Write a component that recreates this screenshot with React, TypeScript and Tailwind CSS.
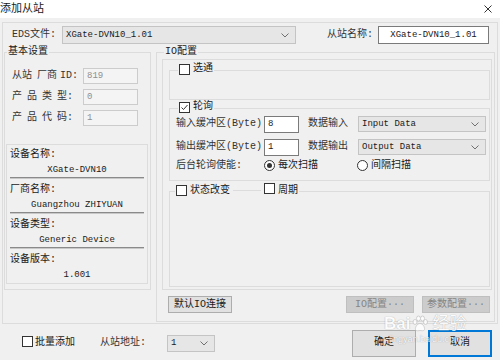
import React from "react";

const F = "font-['Liberation_Mono','Noto_Sans_CJK_SC',monospace]";

function Check({ checked }: { checked?: boolean }) {
  return (
    <span className="w-[11px] h-[11px] border border-[#333333] bg-white inline-flex items-center justify-center shrink-0">
      {checked && (
        <svg width="9" height="9" viewBox="0 0 9 9">
          <path d="M1.5 4.5 L3.5 6.5 L7.5 2" fill="none" stroke="#333" strokeWidth="1" />
        </svg>
      )}
    </span>
  );
}

function Radio({ checked }: { checked?: boolean }) {
  return (
    <span className="w-[11px] h-[11px] rounded-full border border-[#333333] bg-white inline-flex items-center justify-center shrink-0">
      {checked && <span className="w-[5px] h-[5px] rounded-full bg-[#333333]" />}
    </span>
  );
}

function Chevron() {
  return (
    <svg width="8" height="5" viewBox="0 0 8 5" className="shrink-0">
      <path d="M0.5 0.5 L4 4 L7.5 0.5" fill="none" stroke="#707070" strokeWidth="1" />
    </svg>
  );
}

function Section({ label, value }: { label: string; value: string }) {
  return (
    <div className="flex flex-col">
      <div className="h-[12px]">{label}</div>
      <div className="h-[12px] mt-[3px] text-center text-[9px]">{value}</div>
      <div className="h-[2px] mt-[1px] border-t border-[#8a8a8a] bg-[#c8c8c8]" />
      <div className="h-[5px]" />
    </div>
  );
}

function Btn({ label, w, disabled }: { label: string; w: string; disabled?: boolean }) {
  return (
    <div
      className={`${w} h-[17px] flex items-center justify-center border ${
        disabled ? "bg-[#cccccc] border-[#bfbfbf] text-[#858585]" : "bg-[#e1e1e1] border-[#adadad]"
      }`}
    >
      {label}
    </div>
  );
}

export default function App() {
  return (
    <div
      className={`w-[500px] h-[360px] bg-[#f0f0f0] overflow-hidden flex flex-col text-[10px] leading-[12px] text-[#1a1a1a] relative ${F}`}
    >
      {/* Title bar */}
      <div className="h-[18px] bg-white flex items-center justify-between shrink-0">
        <span className="text-[11px]">添加从站</span>
        <svg width="8" height="8" viewBox="0 0 8 8" className="mr-[8px]">
          <path d="M0.5 0.5 L7.5 7.5 M7.5 0.5 L0.5 7.5" stroke="#333" strokeWidth="1" />
        </svg>
      </div>

      {/* Main frame */}
      <div className="mt-[4px] ml-[2px] w-[496px] h-[302px] border border-[#dcdcdc] flex flex-col shrink-0">
        {/* EDS row */}
        <div className="mt-[3px] flex items-center h-[18px]">
          <span className="ml-[9px] w-[50px] text-[#333]">EDS文件:</span>
          <div className="w-[234px] h-[18px] border border-[#c4c4c4] bg-[#e6e6e6] flex items-center justify-between pl-[3px] pr-[6px]">
            <span className="text-[9px]">XGate-DVN10_1.01</span>
            <Chevron />
          </div>
          <span className="ml-[31px] w-[51px] text-[#333]">从站名称:</span>
          <div className="w-[111px] h-[18px] bg-white border border-[#7a7a7a] flex items-center justify-center text-[9px]">
            XGate-DVN10_1.01
          </div>
        </div>

        {/* Columns */}
        <div className="mt-[2px] flex">
          {/* 基本设置 */}
          <fieldset className="ml-[1px] w-[147px] h-[244px] border border-[#dcdcdc] shrink-0">
            <legend className="ml-[2px] px-[1px] leading-[12px]">基本设置</legend>
            <div className="flex flex-col">
              <div className="mt-[10px] flex flex-col gap-[5px]">
                <div className="flex items-center h-[16px]">
                  <span className="ml-[7px] w-[71px] flex text-[#333]">
                    <span>从站</span>
                    <span className="ml-[5px]">厂商</span>
                    <span className="ml-[3px]">ID:</span>
                  </span>
                  <div className="w-[55px] h-[16px] border border-[#cccccc] bg-[#f4f4f4] text-[#8f8f8f] flex items-center pl-[3px] text-[9px]">
                    819
                  </div>
                </div>
                <div className="flex items-center h-[16px]">
                  <span className="ml-[7px] w-[71px] flex text-[#333]">
                    <span className="w-[15px]">产</span>
                    <span className="w-[15px]">品</span>
                    <span className="w-[15px]">类</span>
                    <span>型:</span>
                  </span>
                  <div className="w-[55px] h-[16px] border border-[#cccccc] bg-[#f4f4f4] text-[#8f8f8f] flex items-center pl-[3px] text-[9px]">
                    0
                  </div>
                </div>
                <div className="flex items-center h-[16px]">
                  <span className="ml-[7px] w-[71px] flex text-[#333]">
                    <span className="w-[15px]">产</span>
                    <span className="w-[15px]">品</span>
                    <span className="w-[15px]">代</span>
                    <span>码:</span>
                  </span>
                  <div className="w-[55px] h-[16px] border border-[#cccccc] bg-[#f4f4f4] text-[#8f8f8f] flex items-center pl-[3px] text-[9px]">
                    1
                  </div>
                </div>
              </div>
              <div className="mt-[18px] ml-[1px] w-[142px] h-[140px] border border-[#dcdcdc] pt-[4px] px-[3px] flex flex-col">
                <Section label="设备名称:" value="XGate-DVN10" />
                <Section label="厂商名称:" value="Guangzhou ZHIYUAN" />
                <Section label="设备类型:" value="Generic Device" />
                <div className="h-[12px]">设备版本:</div>
                <div className="h-[12px] mt-[3px] text-center text-[9px]">1.001</div>
              </div>
            </div>
          </fieldset>

          {/* IO配置 */}
          <fieldset className="ml-[5px] w-[339px] h-[276px] border border-[#dcdcdc] shrink-0">
            <legend className="ml-[7px] px-[1px] leading-[12px]">IO配置</legend>
            <div className="flex flex-col">
              <div className="mt-[1px] ml-[5px] w-[330px] h-[231px] border border-[#dcdcdc] flex flex-col">
                {/* 选通 */}
                <fieldset className="mt-[3px] ml-[6px] w-[321px] h-[37px] border border-[#dcdcdc]">
                  <legend className="ml-[8px] px-[1px] leading-[12px]">
                    <span className="inline-flex items-center gap-[3px]">
                      <Check />
                      <span>选通</span>
                    </span>
                  </legend>
                </fieldset>
                {/* 轮询 */}
                <fieldset className="mt-[1px] ml-[6px] w-[321px] h-[80px] border border-[#dcdcdc]">
                  <legend className="ml-[8px] px-[1px] leading-[12px]">
                    <span className="inline-flex items-center gap-[3px]">
                      <Check checked />
                      <span>轮询</span>
                    </span>
                  </legend>
                  <div className="flex flex-col">
                    <div className="flex items-center h-[17px]">
                      <span className="ml-[6px] w-[88px] text-[#333]">输入缓冲区(Byte)</span>
                      <div className="w-[35px] h-[17px] bg-white border border-[#7a7a7a] flex items-center pl-[3px] text-[9px]">
                        8
                      </div>
                      <span className="ml-[9px] w-[50px] text-[#333]">数据输入</span>
                      <div className="w-[128px] h-[16px] border border-[#c4c4c4] bg-[#e6e6e6] flex items-center justify-between pl-[3px] pr-[6px]">
                        <span className="text-[9px]">Input Data</span>
                        <Chevron />
                      </div>
                    </div>
                    <div className="mt-[6px] flex items-center h-[17px]">
                      <span className="ml-[6px] w-[88px] text-[#333]">输出缓冲区(Byte)</span>
                      <div className="w-[35px] h-[17px] bg-white border border-[#7a7a7a] flex items-center pl-[3px] text-[9px]">
                        1
                      </div>
                      <span className="ml-[9px] w-[50px] text-[#333]">数据输出</span>
                      <div className="w-[128px] h-[16px] border border-[#c4c4c4] bg-[#e6e6e6] flex items-center justify-between pl-[3px] pr-[6px]">
                        <span className="text-[9px]">Output Data</span>
                        <Chevron />
                      </div>
                    </div>
                    <div className="mt-[3px] flex items-center h-[14px]">
                      <span className="ml-[6px] w-[88px] text-[#333]">后台轮询使能:</span>
                      <span className="w-[93px] flex items-center gap-[3px]">
                        <Radio checked />
                        <span>每次扫描</span>
                      </span>
                      <span className="flex items-center gap-[3px]">
                        <Radio />
                        <span>间隔扫描</span>
                      </span>
                    </div>
                  </div>
                </fieldset>
                {/* 状态改变 / 周期 */}
                <fieldset className="mt-[2px] ml-[6px] w-[321px] h-[104px] border border-[#dcdcdc]">
                  <legend className="ml-[5px] px-[1px] leading-[12px]">
                    <span className="inline-flex items-center">
                      <Check />
                      <span className="ml-[3px] w-[40px]">状态改变</span>
                      <span className="ml-[3px] w-[28px] h-[1px] bg-[#dcdcdc]" />
                      <span className="ml-[3px]">
                        <Check />
                      </span>
                      <span className="ml-[3px]">周期</span>
                    </span>
                  </legend>
                </fieldset>
              </div>
              {/* buttons */}
              <div className="mt-[6px] flex items-center h-[17px]">
                <div className="ml-[11px]">
                  <Btn label="默认IO连接" w="w-[64px]" />
                </div>
                <div className="ml-[114px]">
                  <Btn label="IO配置···" w="w-[68px]" disabled />
                </div>
                <div className="ml-[8px]">
                  <Btn label="参数配置···" w="w-[68px]" disabled />
                </div>
              </div>
            </div>
          </fieldset>
        </div>
      </div>

      {/* Bottom area */}
      <div className="h-[36px] pt-[2px] flex items-center shrink-0">
        <span className="ml-[22px]">
          <Check />
        </span>
        <span className="ml-[2px] w-[40px]">批量添加</span>
        <span className="ml-[25px] w-[67px] text-[#333]">从站地址:</span>
        <div className="w-[48px] h-[17px] border border-[#c4c4c4] bg-[#e6e6e6] flex items-center justify-between pl-[3px] pr-[6px]">
          <span className="text-[9px]">1</span>
          <Chevron />
        </div>
        <div className="ml-[137px] w-[64px] h-[27px] bg-[#e1e1e1] border border-[#adadad] flex items-center justify-center">
          确定
        </div>
        <div className="ml-[12px] w-[64px] h-[27px] bg-[#e1e1e1] border-2 border-[#0078d7] flex items-center justify-center">
          取消
        </div>
      </div>

      {/* Watermark overlay */}
      <div className="absolute left-[384px] top-[314px] flex flex-col items-center pointer-events-none opacity-80">
        <div className="flex items-center text-white text-[17px] leading-[20px] font-['Liberation_Sans','Noto_Sans_CJK_SC',sans-serif] font-bold [text-shadow:0_0_1px_rgba(0,0,0,0.45)]">
          <span>Bai</span>
          <svg width="18" height="18" viewBox="0 0 18 18" className="mx-[1px]">
            <g fill="#ffffff" stroke="#bdbdbd" strokeWidth="0.8">
              <ellipse cx="4" cy="7" rx="2" ry="2.5" />
              <ellipse cx="7.5" cy="3.5" rx="2" ry="2.5" />
              <ellipse cx="11.5" cy="3.5" rx="2" ry="2.5" />
              <ellipse cx="14.5" cy="7" rx="2" ry="2.5" />
              <path d="M9 8.5 C6 8.5 4 12.5 4.5 14.5 C5 16.5 8 15.5 9 15.5 C10 15.5 13 16.5 13.5 14.5 C14 12.5 12 8.5 9 8.5 Z" />
            </g>
          </svg>
          <span className="ml-[2px] font-normal">经验</span>
        </div>
        <span className="text-[9px] leading-[10px] text-white font-['Liberation_Sans',sans-serif] [text-shadow:0_0_1px_rgba(0,0,0,0.45)]">
          jingyan.baidu.com
        </span>
      </div>
    </div>
  );
}
